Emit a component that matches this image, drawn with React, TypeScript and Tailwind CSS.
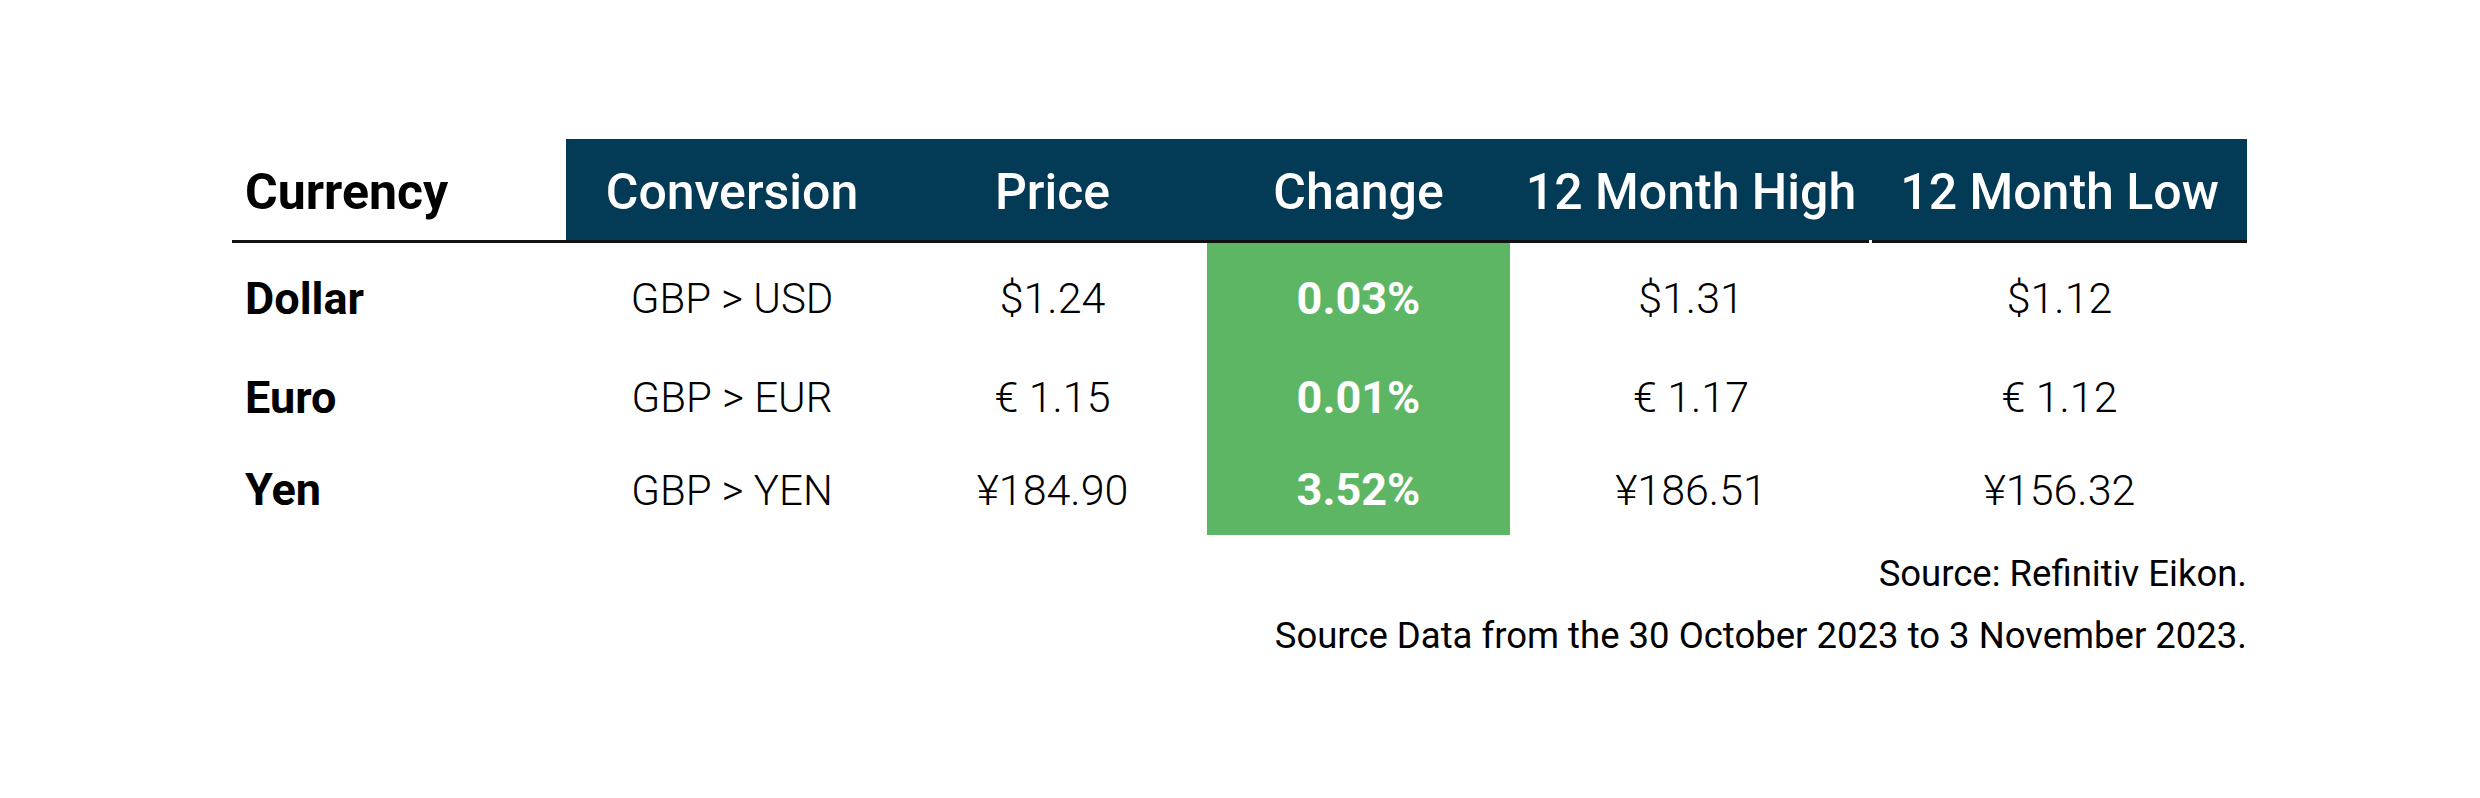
const rows = [
  { name: "Dollar", conv: "GBP > USD", price: "$1.24", change: "0.03%", high: "$1.31", low: "$1.12", h: "h-[103px]", pt: "pt-[8px]" },
  { name: "Euro", conv: "GBP > EUR", price: "€ 1.15", change: "0.01%", high: "€ 1.17", low: "€ 1.12", h: "h-[97px]", pt: "pt-[6px]" },
  { name: "Yen", conv: "GBP > YEN", price: "¥184.90", change: "3.52%", high: "¥186.51", low: "¥156.32", h: "h-[92px]", pt: "pt-[2px]" },
];

const grid = "grid grid-cols-[334px_332px_309px_303px_362px_375px]";

export default function App() {
  return (
    <div className="w-[2480px] h-[798px] bg-white font-['Roboto',sans-serif] text-black">
      <div className="pt-[139px] pl-[232px] w-[2247px]">
        {/* header */}
        <div className={`${grid} h-[101px]`}>
          <div className="flex items-center pl-[13px] pt-[6px] text-[50px] font-bold">Currency</div>
          {["Conversion", "Price", "Change", "12 Month High", "12 Month Low"].map((t) => (
            <div key={t} className="flex items-center justify-center pt-[6px] bg-[#033a55] text-white text-[50px] font-medium whitespace-nowrap">
              {t}
            </div>
          ))}
        </div>
        <div className="flex h-[3px]">
          <div className="w-[1637px] bg-[#111]" />
          <div className="w-[3px]" />
          <div className="w-[375px] bg-[#111]" />
        </div>

        {rows.map((r) => (
          <div key={r.name} className={`${grid} ${r.h}`}>
            <div className={`flex items-center pl-[13px] ${r.pt} text-[45px] font-bold`}>{r.name}</div>
            <div className={`flex items-center justify-center ${r.pt} text-[42px] font-light`}>{r.conv}</div>
            <div className={`flex items-center justify-center ${r.pt} text-[43px] font-light`}>{r.price}</div>
            <div className={`flex items-center justify-center ${r.pt} bg-[#5db663] text-white text-[45px] font-bold`}>{r.change}</div>
            <div className={`flex items-center justify-center ${r.pt} text-[43px] font-light`}>{r.high}</div>
            <div className={`flex items-center justify-center ${r.pt} text-[43px] font-light`}>{r.low}</div>
          </div>
        ))}

        <div className="text-right text-[36.5px] leading-[40px]">
          <p className="mt-[19px]">Source: Refinitiv Eikon.</p>
          <p className="mt-[22px]">Source Data from the 30 October 2023 to 3 November 2023.</p>
        </div>
      </div>
    </div>
  );
}
